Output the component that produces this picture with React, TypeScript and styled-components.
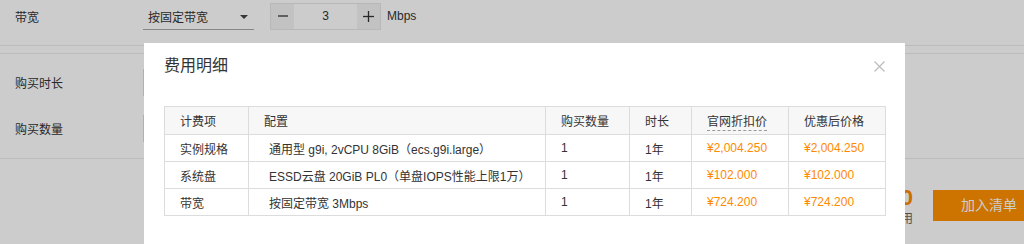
import React, { ReactElement } from 'react';
import styled, { createGlobalStyle } from 'styled-components';

const GlobalStyle = createGlobalStyle`
  html, body {
    margin: 0;
    padding: 0;
    background: #ffffff;
  }
  body {
    font-family: "Liberation Sans", "Noto Sans CJK SC", sans-serif;
    font-size: 12px;
    color: #333;
  }
`;

type Row = {
  item: string;
  spec: string;
  qty: string;
  period: string;
  listPrice: string;
  finalPrice: string;
};

const rows: Row[] = [
  {
    item: '实例规格',
    spec: '通用型 g9i, 2vCPU 8GiB（ecs.g9i.large）',
    qty: '1',
    period: '1年',
    listPrice: '¥2,004.250',
    finalPrice: '¥2,004.250',
  },
  {
    item: '系统盘',
    spec: 'ESSD云盘 20GiB PL0（单盘IOPS性能上限1万）',
    qty: '1',
    period: '1年',
    listPrice: '¥102.000',
    finalPrice: '¥102.000',
  },
  {
    item: '带宽',
    spec: '按固定带宽 3Mbps',
    qty: '1',
    period: '1年',
    listPrice: '¥724.200',
    finalPrice: '¥724.200',
  },
];

const colWidths = [84, 297, 84, 62, 97, 97];

export default function App(): ReactElement {
  return (
    <>
      <GlobalStyle />
      <Page>
        <TopRow>
          <Label>带宽</Label>
          <Select>
            <span>按固定带宽</span>
            <Caret />
          </Select>
          <Stepper>
            <StepButton>
              <svg width="10" height="10" viewBox="0 0 10 10">
                <line x1="0" y1="5" x2="10" y2="5" stroke="#333" strokeWidth="1.3" />
              </svg>
            </StepButton>
            <StepValue>3</StepValue>
            <StepButton>
              <svg width="11" height="11" viewBox="0 0 11 11">
                <line x1="0" y1="5.5" x2="11" y2="5.5" stroke="#333" strokeWidth="1.3" />
                <line x1="5.5" y1="0" x2="5.5" y2="11" stroke="#333" strokeWidth="1.3" />
              </svg>
            </StepButton>
          </Stepper>
          <Unit>Mbps</Unit>
        </TopRow>
        <Band />
        <Section>
          <FormRow>
            <Label>购买时长</Label>
            <FieldBox />
          </FormRow>
          <FormRow>
            <Label>购买数量</Label>
            <FieldBox />
          </FormRow>
        </Section>
        <Footer>
          <PriceBlock>
            <PriceValue>¥2,830.450</PriceValue>
            <PriceNote>配置费用</PriceNote>
          </PriceBlock>
          <AddButton>加入清单</AddButton>
        </Footer>

        <Mask />

        <Modal>
          <ModalHeader>
            <ModalTitle>费用明细</ModalTitle>
            <Close>
              <svg width="11" height="11" viewBox="0 0 11 11">
                <line x1="0.5" y1="0.5" x2="10.5" y2="10.5" stroke="#bdbdbd" strokeWidth="1.2" />
                <line x1="10.5" y1="0.5" x2="0.5" y2="10.5" stroke="#bdbdbd" strokeWidth="1.2" />
              </svg>
            </Close>
          </ModalHeader>
          <ModalBody>
            <Table>
              <colgroup>
                {colWidths.map((w, i) => (
                  <col key={i} style={{ width: w }} />
                ))}
              </colgroup>
              <thead>
                <tr>
                  <Th>计费项</Th>
                  <Th>配置</Th>
                  <Th>购买数量</Th>
                  <Th>时长</Th>
                  <Th>
                    <Dotted>官网折扣价</Dotted>
                  </Th>
                  <Th>优惠后价格</Th>
                </tr>
              </thead>
              <tbody>
                {rows.map(r => (
                  <tr key={r.item}>
                    <Td>{r.item}</Td>
                    <Td indent>{r.spec}</Td>
                    <Td>{r.qty}</Td>
                    <Td>{r.period}</Td>
                    <Td price>{r.listPrice}</Td>
                    <Td price>{r.finalPrice}</Td>
                  </tr>
                ))}
              </tbody>
            </Table>
          </ModalBody>
        </Modal>
      </Page>
    </>
  );
}

const Page = styled.div`
  position: relative;
  width: 1024px;
  height: 244px;
  overflow: hidden;
  background: #fff;
`;

const TopRow = styled.div`
  display: flex;
  align-items: center;
  height: 46px;
  padding-bottom: 13px;
  box-sizing: border-box;
  border-bottom: 1px solid #ececec;
`;

const Label = styled.div`
  width: 128px;
  padding-left: 15px;
  color: #333;
  font-size: 12px;
`;

const Select = styled.div`
  display: flex;
  align-items: center;
  justify-content: space-between;
  width: 111px;
  height: 27px;
  box-sizing: border-box;
  padding: 0 6px 0 5px;
  border-bottom: 1px solid #a8a8a8;
  color: #333;
  font-size: 12px;
  margin-top: 1px;
`;

const Caret = styled.i`
  width: 0;
  height: 0;
  border-left: 4px solid transparent;
  border-right: 4px solid transparent;
  border-top: 4px solid #444;
  margin-top: 1px;
`;

const Stepper = styled.div`
  display: flex;
  margin-left: 16px;
  width: 111px;
  height: 27px;
  box-sizing: border-box;
  border: 1px solid #e6e6e6;
`;

const StepButton = styled.div`
  display: flex;
  align-items: center;
  justify-content: center;
  width: 23px;
  background: #f3f3f3;
`;

const StepValue = styled.div`
  flex: 1;
  text-align: center;
  line-height: 25px;
  font-size: 12px;
  color: #333;
`;

const Unit = styled.div`
  margin-left: 6px;
  font-size: 12px;
  color: #333;
`;

const Band = styled.div`
  height: 7px;
  border-bottom: 1px solid #ececec;
`;

const Section = styled.div`
  display: flex;
  flex-direction: column;
  gap: 19px;
  padding: 15px 0 16px;
  border-bottom: 1px solid #ececec;
`;

const FormRow = styled.div`
  display: flex;
  align-items: center;
  height: 27px;
`;

const FieldBox = styled.div`
  width: 200px;
  height: 27px;
  box-sizing: border-box;
  border: 1px solid #dcdcdc;
`;

const Footer = styled.div`
  display: flex;
  justify-content: flex-end;
  align-items: flex-start;
  padding-top: 31px;
  margin-right: -21px;
`;

const PriceBlock = styled.div`
  margin-top: -4px;
  margin-right: 20px;
  text-align: right;
`;

const PriceValue = styled.div`
  color: #ff8a00;
  font-size: 22px;
  font-weight: bold;
  line-height: 24px;
`;

const PriceNote = styled.div`
  color: #666;
  font-size: 12px;
  line-height: 18px;
`;

const AddButton = styled.div`
  width: 112px;
  height: 31px;
  line-height: 31px;
  text-align: center;
  background: #ff9000;
  color: #fff;
  font-size: 14px;
`;

const Mask = styled.div`
  position: absolute;
  inset: 0;
  background: rgba(0, 0, 0, 0.2);
`;

const Modal = styled.div`
  position: absolute;
  left: 144px;
  top: 43px;
  width: 761px;
  height: 240px;
  background: #fff;
`;

const ModalHeader = styled.div`
  position: relative;
  padding: 12px 20px 0;
  height: 22px;
`;

const ModalTitle = styled.div`
  font-size: 16px;
  line-height: 22px;
  color: #333;
`;

const Close = styled.div`
  position: absolute;
  right: 20px;
  top: 18px;
  width: 11px;
  height: 11px;
  line-height: 0;
`;

const ModalBody = styled.div`
  padding: 29px 20px 0;
`;

const Table = styled.table`
  width: 721px;
  border-collapse: collapse;
  table-layout: fixed;
  border: 1px solid #dcdcdc;
  font-size: 12px;
  color: #333;
`;

const Th = styled.th`
  height: 27px;
  padding: 0 0 0 15px;
  text-align: left;
  font-weight: normal;
  background: #f7f7f7;
  border: 1px solid #dcdcdc;
`;

const Td = styled.td<{ indent?: boolean; price?: boolean }>`
  height: 26px;
  padding: 0 0 0 ${props => (props.indent ? '20px' : '15px')};
  border: 1px solid #dcdcdc;
  border-top-color: #e6e6e6;
  color: ${props => (props.price ? '#ff8a00' : '#333')};
  white-space: nowrap;
`;

const Dotted = styled.span`
  border-bottom: 1px dashed #999;
  padding-bottom: 1px;
`;
